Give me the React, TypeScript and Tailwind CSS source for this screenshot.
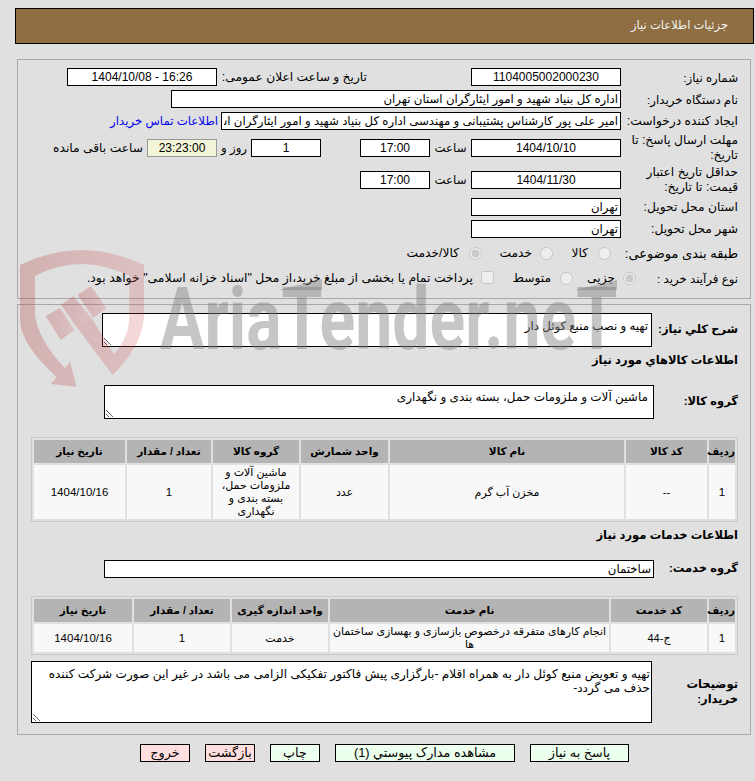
const Field = ({ value, className = "" }: { value: string; className?: string }) => (
  <input
    readOnly
    value={value}
    className={"h-[18px] shrink-0 border border-black bg-white px-0.5 text-black outline-none " + (/[0-9]/.test(value) ? "text-[12px] " : "text-[11.75px] ") + className}
  />
);

const Row = ({ label, h = "h-[18px]", size = "", children }: { label: string; h?: string; size?: string; children?: React.ReactNode }) => (
  <div className={"flex items-center " + h}>
    <div className={"w-[117px] shrink-0 leading-[15px] " + size}>{label}</div>
    {children}
  </div>
);

const Radio = ({ label, checked, name, className = "" }: { label: string; checked?: boolean; name: string; className?: string }) => (
  <label className={"flex items-center whitespace-nowrap text-[12.25px] " + className}>
    <input type="radio" name={name} disabled defaultChecked={checked} className="m-0 size-[13px] shrink-0" />
    <span>{label}</span>
  </label>
);

const goodsCols = ["w-[26px]", "w-[81px]", "w-[234px]", "w-[87px]", "w-[86px]", "w-[84px]", "w-[91px]"];
const serviceCols = ["w-[26px]", "w-[96px]", "w-[279px]", "w-[96px]", "w-[96px]", "w-[98px]"];

const DataTable = ({ cols, head, cells, rowH }: { cols: string[]; head: string[]; cells: string[]; rowH: string }) => (
  <table className="w-[707px] table-fixed border-separate border-spacing-0.5 border border-[#c8c8c8]">
    <colgroup>
      {cols.map((c, i) => (
        <col key={i} className={c} />
      ))}
    </colgroup>
    <thead>
      <tr>
        {head.map((t) => (
          <th key={t} className="h-[23px] bg-[#b4b4b4] p-0 text-center text-[10.5px] font-bold">
            {t}
          </th>
        ))}
      </tr>
    </thead>
    <tbody>
      <tr>
        {cells.map((t, i) => (
          <td
            key={i}
            className={"bg-[#f8f8f8] p-0 text-center leading-[13px] " + (/^[\d/]+$/.test(t) ? "text-[11.5px] " : "text-[11px] ") + rowH}
          >
            {t}
          </td>
        ))}
      </tr>
    </tbody>
  </table>
);

const Btn = ({ children, w, pink }: { children: React.ReactNode; w: string; pink?: boolean }) => (
  <button className={"h-[18px] border border-black text-[12.75px] leading-none " + w + (pink ? " bg-[#ffdede]" : " bg-[#edffed]")}>
    {children}
  </button>
);

export default function App() {
  return (
    <div
      dir="rtl"
      className="relative h-[781px] w-[755px] overflow-hidden bg-[#e0e0e0] pt-2 font-['Liberation_Sans','DejaVu_Sans',sans-serif] text-[11.75px] text-black"
    >
      <div className="ml-[15px] mr-px flex h-9 items-center border border-black bg-[#8e6e42] pr-[25px] text-[11.5px] text-[#f4f4f4]">
        جزئیات اطلاعات نیاز
      </div>

      <div className="ml-[17px] mr-1 mt-[15px] flex flex-col gap-1 border border-[#a8a8a8] pb-[10px] pl-3 pr-3 pt-2">
        <Row label="شماره نیاز:">
          <Field value="1104005002000230" className="w-[150px] text-center" />
          <div className="mr-[104px] w-[150px] whitespace-nowrap text-[12.25px]">تاریخ و ساعت اعلان عمومی:</div>
          <Field value="16:26 - 1404/10/08" className="w-[150px] text-center" />
        </Row>
        <Row label="نام دستگاه خریدار:">
          <Field value="اداره کل بنیاد شهید و امور ایثارگران استان تهران" className="w-[450px] !text-[11.75px]" />
        </Row>
        <Row label="ایجاد کننده درخواست:" size="text-[12.25px] whitespace-nowrap">
          <Field value="امیر علی پور کارشناس پشتیبانی و مهندسی اداره کل بنیاد شهید و امور ایثارگران استان تهران" className="w-[400px]" />
          <a href="#" className="mr-[3px] whitespace-nowrap text-[#0000ee]">
            اطلاعات تماس خریدار
          </a>
        </Row>
        <Row label="مهلت ارسال پاسخ: تا تاریخ:" h="h-7" size="text-[12.25px]">
          <Field value="1404/10/10" className="w-[150px] text-center" />
          <div className="w-[41px] text-center">ساعت</div>
          <Field value="17:00" className="w-[70px] text-center" />
          <Field value="1" className="mr-[39px] w-[70px] text-center" />
          <div className="w-[34px] text-center">روز و</div>
          <Field value="23:23:00" className="w-[70px] !border-[#999] !bg-[#f4f4d8] text-center" />
          <div className="mr-1 whitespace-nowrap text-[12.25px]">ساعت باقی مانده</div>
        </Row>
        <Row label="حداقل تاریخ اعتبار قیمت: تا تاریخ:" h="h-7" size="text-[12.25px]">
          <Field value="1404/11/30" className="w-[150px] text-center" />
          <div className="w-[41px] text-center">ساعت</div>
          <Field value="17:00" className="w-[70px] text-center" />
        </Row>
        <Row label="استان محل تحویل:" size="text-[12.25px]">
          <Field value="تهران" className="w-[150px]" />
        </Row>
        <Row label="شهر محل تحویل:" size="text-[12.25px]">
          <Field value="تهران" className="w-[150px]" />
        </Row>
        <Row label="طبقه بندی موضوعی:" h="h-[22px]" size="text-[13px] whitespace-nowrap">
          <Radio name="kind" label="کالا" className="mr-[10px] w-[58px] gap-[10px]" />
          <Radio name="kind" label="خدمت" className="w-[71px] gap-2" />
          <Radio name="kind" label="کالا/خدمت" checked className="gap-[10px]" />
        </Row>
        <Row label="نوع فرآیند خرید :" h="h-5">
          <Radio name="proc" label="جزیی" checked className="-mr-[15px] w-[63px] gap-2" />
          <Radio name="proc" label="متوسط" className="w-[79px] gap-[9px]" />
          <label className="flex items-center gap-2 whitespace-nowrap text-[12.4px]">
            <input type="checkbox" disabled className="m-0 size-[13px]" />
            <span>پرداخت تمام یا بخشی از مبلغ خرید،از محل "اسناد خزانه اسلامی" خواهد بود.</span>
          </label>
        </Row>
      </div>

      <div className="ml-[17px] mr-1 mt-[5px] border border-[#a8a8a8] pb-[11px] pl-3 pr-3 pt-2">
        <div className="flex h-[34px] items-center">
          <div className="w-[86px] shrink-0 whitespace-nowrap text-[11.5px] font-bold">شرح کلي نیاز:</div>
          <textarea readOnly value="تهیه و نصب منبع کوئل دار" className="h-[34px] w-[550px] border border-black bg-white px-[3px] pt-[3px] outline-none" />
        </div>
        <div className="mt-1 flex h-5 items-center text-[11.5px] font-bold">اطلاعات کالاهاي مورد نیاز</div>
        <div className="mt-[14px] flex h-[34px] items-center">
          <div className="w-[84px] shrink-0 text-[11.5px] font-bold">گروه کالا:</div>
          <textarea readOnly value="ماشین آلات و ملزومات حمل، بسته بندی و نگهداری" className="h-[34px] w-[550px] border border-black bg-white px-[5px] pt-0.5 text-[12px] outline-none" />
        </div>
        <div className="mt-[18px]">
          <DataTable
            cols={goodsCols}
            rowH="h-[54px]"
            head={["ردیف", "کد کالا", "نام کالا", "واحد شمارش", "گروه کالا", "تعداد / مقدار", "تاریخ نیاز"]}
            cells={["1", "--", "مخزن آب گرم", "عدد", "ماشین آلات و ملزومات حمل، بسته بندی و نگهداری", "1", "1404/10/16"]}
          />
        </div>
        <div className="mt-1 flex h-5 items-center text-[11.5px] font-bold">اطلاعات خدمات مورد نیاز</div>
        <div className="mt-[14px] flex h-[18px] items-center">
          <div className="w-[84px] shrink-0 text-[11.5px] font-bold">گروه خدمت:</div>
          <Field value="ساختمان" className="w-[550px]" />
        </div>
        <div className="mt-[18px]">
          <DataTable
            cols={serviceCols}
            rowH="h-7"
            head={["ردیف", "کد خدمت", "نام خدمت", "واحد اندازه گیری", "تعداد / مقدار", "تاریخ نیاز"]}
            cells={["1", "ج-44", "انجام کارهای متفرقه درخصوص بازسازی و بهسازی ساختمان ها", "خدمت", "1", "1404/10/16"]}
          />
        </div>
        <div className="mt-[6px] flex h-[62px] items-center">
          <div className="w-[86px] shrink-0 text-[11.5px] font-bold leading-[15px]">توضیحات خریدار:</div>
          <textarea
            readOnly
            value="تهیه و تعویض منبع کوئل دار به همراه اقلام -بارگزاری پیش فاکتور تفکیکی الزامی می باشد در غیر این صورت شرکت کننده حذف می گردد-"
            className="h-[62px] w-[621px] border border-black bg-white px-px pt-[5px] text-[12.1px] leading-[14px] outline-none"
          />
        </div>
      </div>

      <div className="mr-[126px] mt-[9px] flex gap-[15px]">
        <Btn w="w-[99px]">پاسخ به نیاز</Btn>
        <Btn w="w-[180px]">مشاهده مدارک پیوستي (1)</Btn>
        <Btn w="w-[50px]">چاپ</Btn>
        <Btn w="w-[50px]" pink>بازگشت</Btn>
        <Btn w="w-[50px]" pink>خروج</Btn>
      </div>

      {/* watermark */}
      <svg viewBox="0 0 450 600" className="pointer-events-none absolute left-[10px] top-[240px] h-[200px] w-[150px]">
        <defs>
          <linearGradient id="wm" x1="0" x2="1" y1="0" y2="0">
            <stop offset="0" stopColor="#b04040" stopOpacity="0.3" />
            <stop offset="1" stopColor="#d05050" stopOpacity="0.22" />
          </linearGradient>
        </defs>
        <path
          fill="url(#wm)"
          d="M30 75 Q215 -15 402 75 L402 230 Q395 320 308 405 L205 268 L245 235 L312 342 Q358 290 358 230 L358 108 Q215 36 75 108 L75 225 Q85 300 165 385 L180 365 L200 440 L122 432 L140 412 Q30 310 30 240 Z"
        />
        <path fill="url(#wm)" d="M107 228 L150 203 L193 270 L152 300 Z" />
        <path fill="url(#wm)" d="M153 195 L190 168 L245 235 L205 268 Z" />
        <path fill="url(#wm)" d="M203 165 L243 138 L290 205 L250 233 Z" />
      </svg>
      <div
        dir="ltr"
        className="pointer-events-none absolute left-[160px] top-[269px] origin-left scale-x-[0.76] whitespace-nowrap font-['Roboto',sans-serif] text-[87px] font-bold leading-[100px] text-[#808080]/45"
      >
        AriaTender.neT
      </div>
      {/* slanted tips on the two T's of the logo */}
      <svg viewBox="0 0 755 781" className="pointer-events-none absolute left-0 top-0 h-[781px] w-[755px]">
        <path fill="#808080" fillOpacity="0.45" d="M278 290 L322 290 L322 279 Z" />
        <path fill="#808080" fillOpacity="0.45" d="M575 290 L617 290 L617 280 Z" />
      </svg>
    </div>
  );
}
